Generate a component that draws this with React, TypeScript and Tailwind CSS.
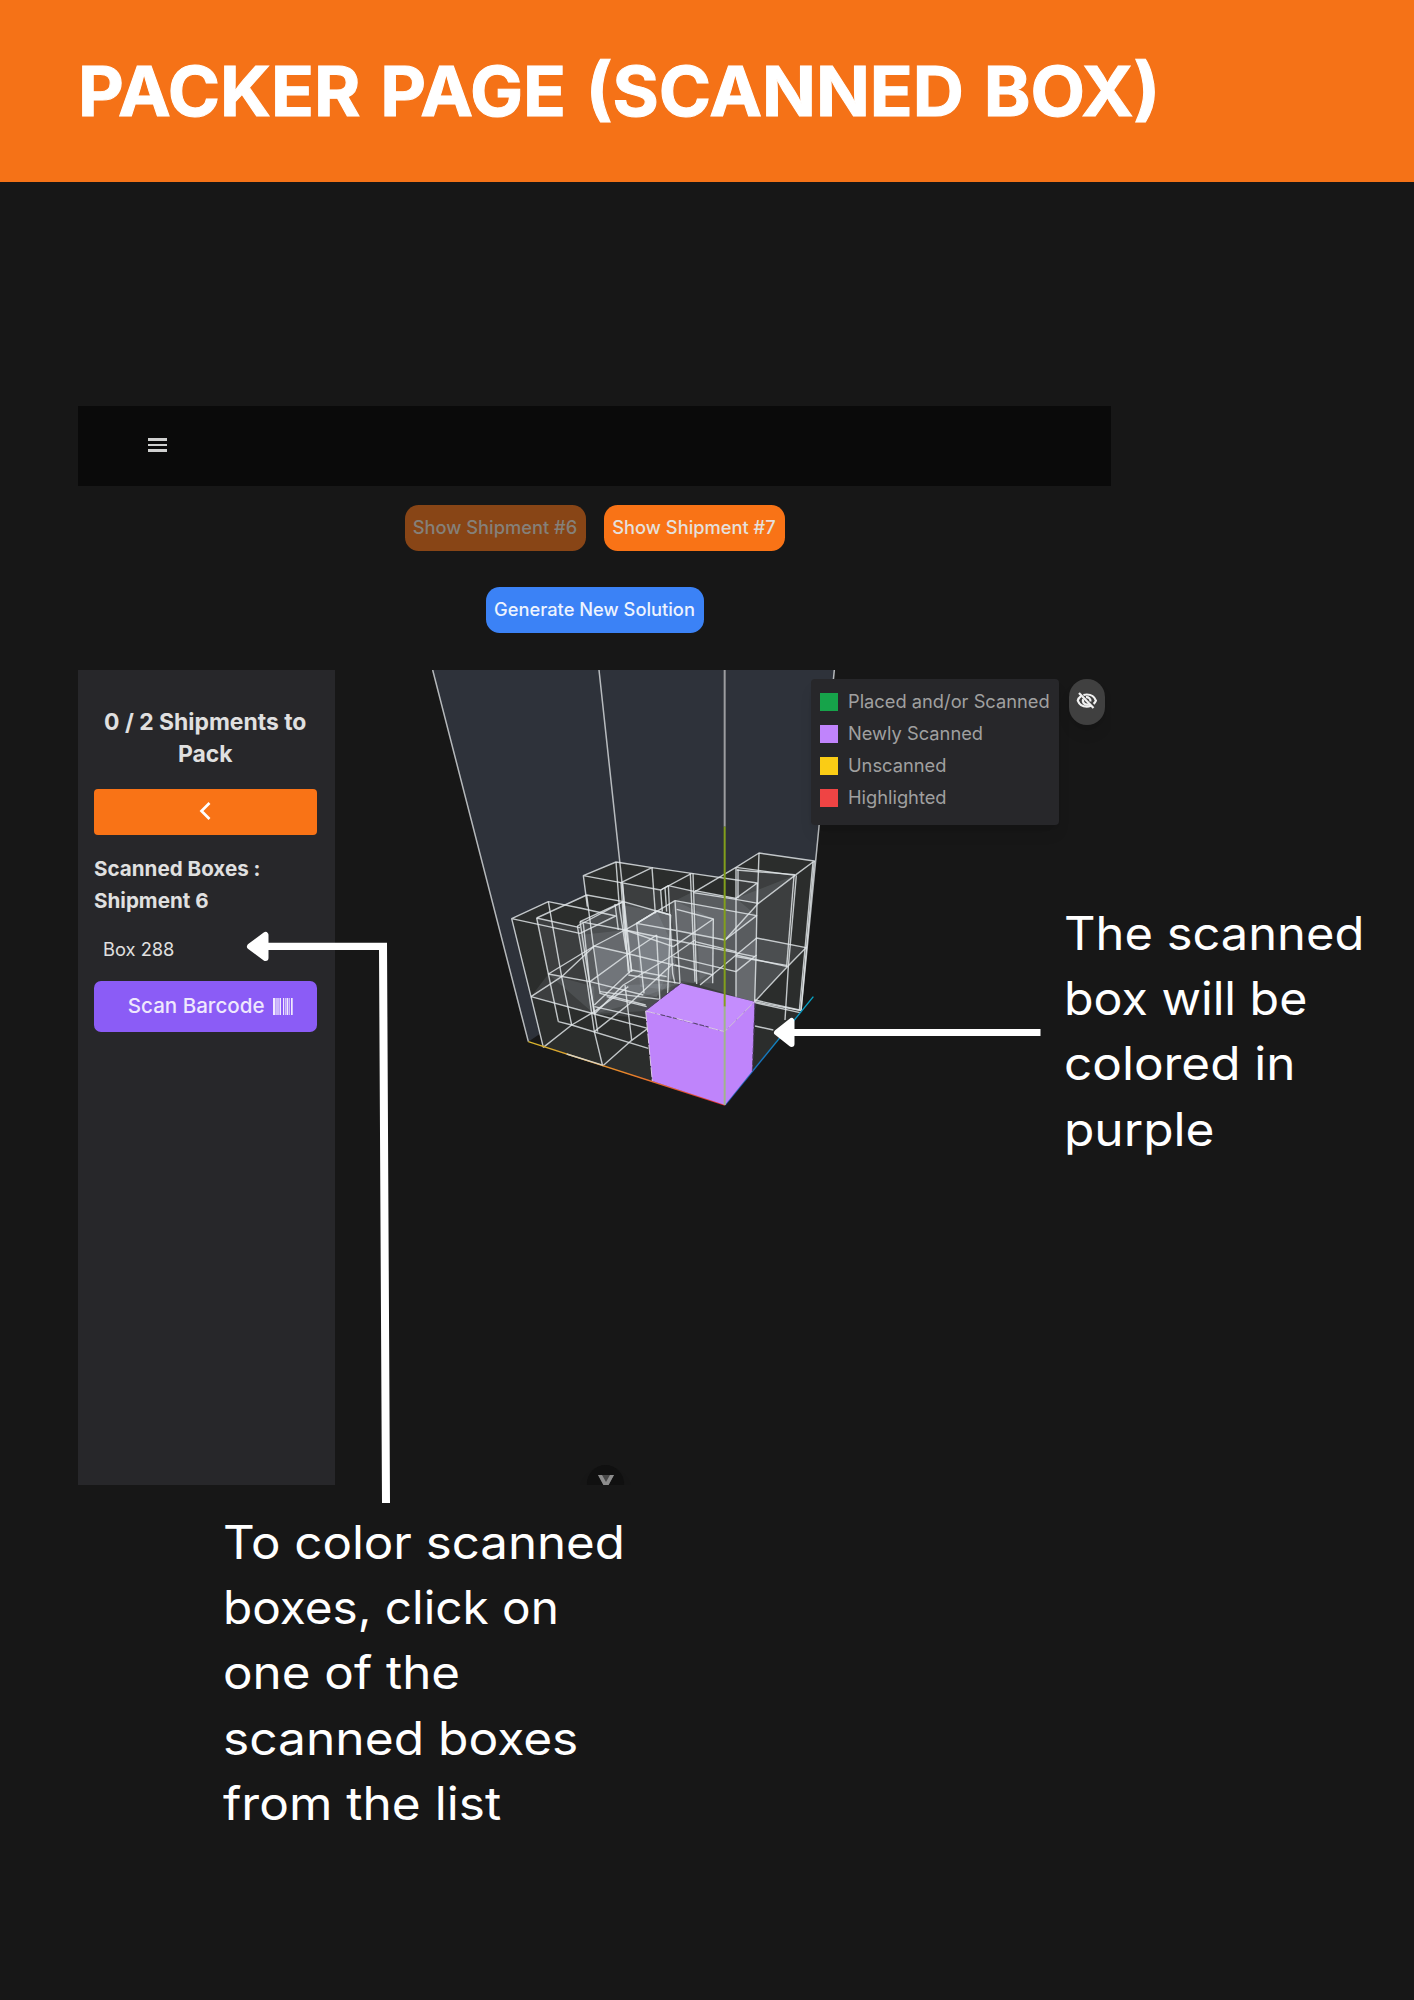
type Line = { text: string; stretch: string };

const scannedNote: Line[] = [
  { text: "The scanned", stretch: "scale-x-[1.062]" },
  { text: "box will be", stretch: "scale-x-[1.050]" },
  { text: "colored in", stretch: "scale-x-[1.075]" },
  { text: "purple", stretch: "scale-x-[1.078]" },
];

const listNote: Line[] = [
  { text: "To color scanned", stretch: "scale-x-[1.070]" },
  { text: "boxes, click on", stretch: "scale-x-[1.037]" },
  { text: "one of the", stretch: "scale-x-[1.072]" },
  { text: "scanned boxes", stretch: "scale-x-[1.080]" },
  { text: "from the list", stretch: "scale-x-[1.078]" },
];

const legend = [
  { label: "Placed and/or Scanned", color: "bg-[#16a34a]" },
  { label: "Newly Scanned", color: "bg-[#c084fc]" },
  { label: "Unscanned", color: "bg-[#facc15]" },
  { label: "Highlighted", color: "bg-[#ef4444]" },
];

// Translucent faces of the stacked boxes.
const faces = [
  "363,128 482,150 487,215 512,225 525,182 585,152 708,175 708,345 585,430 385,395",
  "110,234 240,263 283,522 145,402",
  "93,470 145,402 283,440 283,522",
  "505,137 585,152 708,175 770,227 675,300 520,270",
  "232,258 370,185 512,225 520,360 470,470 283,522",
  "240,245 345,192 470,213 520,320 540,430 437,513 283,522",
  "283,318 410,250 525,182 640,237 640,430 543,430 400,480 300,460",
  "378,270 525,300 525,410 470,470 385,450",
  "283,318 380,345 395,395 300,460",
  "410,250 470,213 512,225 520,320 510,450 420,440",
  "240,285 378,270 385,440 283,522",
  "585,155 708,175 708,470 600,435",
  "708,175 885,106 862,380 764,485 708,470",
  "714,90 885,106 775,190 708,175",
  "525,182 770,227 765,345 764,485 540,430",
  "708,345 770,350 764,485 708,470",
  "708,175 772,129 770,350 708,345",
  "770,294 918,323 862,380 708,345",
  "283,522 375,435 540,430 437,513 440,535",
  "862,380 764,485 708,470 708,345",
];

const edges = [
  "250,107 348,66 456,83 363,128 250,107 262,200",
  "348,66 358,200 378,330",
  "456,83 575,100 482,150 363,128 372,260 388,400",
  "368,130 378,265 395,395",
  "456,83 466,220",
  "482,150 487,215",
  "495,143 500,215",
  "575,100 772,129 708,175 585,152",
  "482,150 505,137 585,155",
  "571,100 585,425",
  "579,100 590,432",
  "505,137 518,400 525,430",
  "585,155 708,82 777,39 943,63 885,106 708,82",
  "580,158 708,178 775,190",
  "708,82 708,470",
  "714,88 714,175",
  "710,90 885,104",
  "777,39 772,190",
  "943,63 903,512",
  "939,65 898,512",
  "889,106 865,380 855,540",
  "882,108 860,380",
  "885,106 775,190 675,300",
  "772,129 768,350 764,485",
  "525,182 770,227 675,300 520,270 410,250 525,182 540,430",
  "530,208 640,237 520,320",
  "640,237 638,430",
  "35,236 145,185 240,204 347,228 240,280 35,236 93,470 130,622",
  "145,185 185,410 215,555",
  "110,234 260,165 370,185 240,245",
  "110,234 240,263",
  "110,234 175,545",
  "260,165 280,318 300,460 437,495",
  "232,258 370,185 512,225",
  "240,245 375,270 520,320",
  "232,258 262,430 283,575 308,678",
  "240,245 283,522",
  "250,250 268,420 293,575",
  "345,192 355,270",
  "370,185 385,395",
  "283,318 375,270 410,250 470,213 512,225",
  "470,213 410,250 432,460",
  "512,225 503,460",
  "470,285 480,490",
  "93,470 185,410 283,318",
  "145,402 283,318 400,345 540,380",
  "93,470 283,522 480,575",
  "145,402 270,425 430,465",
  "130,622 215,555 283,515 385,440",
  "308,678 390,605 505,520",
  "175,545 215,555 445,625",
  "283,522 370,435 520,345 585,300",
  "283,575 390,490 520,370",
  "270,425 380,345 470,285",
  "283,495 395,390 500,410",
  "300,455 480,478",
  "283,500 440,535",
  "320,470 440,500",
  "385,405 540,430",
  "375,435 395,600",
  "375,270 520,300 765,350",
  "520,350 708,395 770,345",
  "525,375 640,405",
  "600,435 770,294 918,323 862,380 708,345",
  "708,350 860,376",
  "862,380 764,485 903,512",
  "764,480 898,510",
  "764,488 900,518",
  "765,558 820,570",
  "585,305 708,335",
];

function PackingScene() {
  return (
    <svg className="block h-[815px] w-[776px]" viewBox="-495 -510 2328 2445" fill="none">
      <defs>
        <linearGradient id="widthAxis" x1="675" y1="795" x2="85" y2="605" gradientUnits="userSpaceOnUse">
          <stop stopColor="#e02f34" />
          <stop offset="0.5" stopColor="#e8842a" />
          <stop offset="1" stopColor="#d6b52c" />
        </linearGradient>
        <linearGradient id="depthAxis" x1="675" y1="795" x2="940" y2="470" gradientUnits="userSpaceOnUse">
          <stop stopColor="#2452b8" />
          <stop offset="1" stopColor="#06a5c4" />
        </linearGradient>
      </defs>
      <polygon points="-202,-510 1003,-510 903,512 395,395 85,605" fill="#2e323a" />
      <polygon
        points="35,236 145,185 200,196 262,165 250,107 348,66 575,100 660,112 777,39 943,63 903,512 675,795 130,622"
        fill="#2b2d2c"
      />
      {faces.map((points) => (
        <polygon key={points} points={points} fill="#eef4fa" fillOpacity="0.09" />
      ))}
      <path d="M-202-510 85 605M297-510 395 395M1003-510 903 512" stroke="#d9dde0" strokeWidth="4.500" strokeOpacity="0.8" />
      <g stroke="#e3e8ea" strokeWidth="4.200" strokeOpacity="0.82" strokeLinejoin="round">
        {edges.map((points) => (
          <polyline key={points} points={points} />
        ))}
      </g>
      <path d="M675 795 85 605" stroke="url(#widthAxis)" strokeWidth="4" />
      <path d="M200 642 310 676" stroke="#d8d2c2" strokeWidth="4" />
      <path d="M675 795 940 470" stroke="url(#depthAxis)" strokeWidth="4" />
      <polygon points="437,513 674,575 675,795 457,723" fill="#bf84fb" />
      <polygon points="437,513 543,430 764,485 674,575" fill="#c48dfd" />
      <polygon points="674,575 764,485 757,693 675,795" fill="#bf84fb" />
      <path d="M437 513 480 524M520 533 575 547M625 562 674 575 764 485M437 513 457 723" stroke="#dcc9e8" strokeWidth="3" strokeDasharray="30 4" />
      <path d="M482 524 530 536M580 549 626 561M437 510 543 430M765 490 757 693" stroke="#53406b" strokeWidth="3" strokeDasharray="14 5" />
      <path d="M674-510V-40" stroke="#9c9da0" strokeWidth="6" />
      <path d="M674-40V500" stroke="#829f1c" strokeWidth="6" />
      <path d="M674 500V795" stroke="#a0b58b" strokeWidth="6" />
    </svg>
  );
}

function EyeOff() {
  return (
    <svg className="h-[18px] w-[22px]" viewBox="0 0 22 18" fill="none" stroke="#f1f1f1" strokeWidth="2.200">
      <path d="M5 4.2C3.3 5.4 2.2 7 1.8 8.6c1.3 3.4 4.8 6 9 6 1.4 0 2.8-.3 4-.8M7.4 3c1.100-.3 2.200-.5 3.400-.5 4.300 0 7.800 2.500 9.100 6.100-.5 1.300-1.300 2.400-2.300 3.300" />
      <path d="M7.200 7.200a4 4 0 0 0 5.600 5M10 5.200a4 4 0 0 1 4.500 4.300" />
      <path d="m3 1 14.500 15" />
    </svg>
  );
}

function Barcode() {
  return (
    <svg className="h-[17px] w-[20px]" viewBox="0 0 20 17" fill="#f1eafe">
      <path d="M0 0h2.500v17H0zM6.500 0H8v17H6.500zM10 0h1.200v17H10zM13.500 0H15v17h-1.500zM18 0h1.700v17H18z" />
      <path d="M3 0h3v17H3zM12 0h1v17h-1zM15.500 0H17v17h-1.500z" fillOpacity="0.65" />
    </svg>
  );
}

function Note({ lines }: { lines: Line[] }) {
  return (
    <p className="text-[46px] leading-[65.2px] text-white">
      {lines.map((line) => (
        <span key={line.text} className={`block w-max origin-left whitespace-nowrap ${line.stretch}`}>
          {line.text}
        </span>
      ))}
    </p>
  );
}

function Sidebar() {
  return (
    <aside className="flex h-[815px] w-[257px] flex-col bg-[#27272a] pt-[36px] pr-[18.5px] pl-4 text-[#e0e0e0]">
      <h2 className="text-center text-[22.9px] leading-8 font-bold">0 / 2 Shipments to Pack</h2>
      <button className="mt-[19px] flex h-[46px] items-center justify-center rounded bg-[#f97316] pb-[2px]">
        <svg className="h-[20px] w-[12px]" viewBox="0 0 12 20" fill="none" stroke="#fff" strokeWidth="2.700">
          <path d="M10.500 2 2.500 10l8 8" />
        </svg>
      </button>
      <h3 className="mt-[18px] text-[20.600px] leading-8 font-bold">
        Scanned Boxes :<br />
        Shipment 6
      </h3>
      <p className="mt-[16px] pl-[9px] text-[18.300px] leading-8">Box 288</p>
      <button className="mt-[16px] flex h-[51px] items-center justify-end gap-[8px] rounded-[7px] bg-[#8b5cf6] pr-[24px] text-[20.570px] font-medium text-[#efe8fd]">
        Scan Barcode
        <Barcode />
      </button>
    </aside>
  );
}

export default function App() {
  return (
    <div className="relative h-[2000px] w-[1414px] overflow-hidden bg-[#171717] font-['Inter',sans-serif]">
      <header className="flex h-[182px] items-center bg-[#f57217] pl-[78px]">
        <h1 className="origin-left scale-x-[1.025] text-[69px] leading-none font-bold whitespace-nowrap text-white [-webkit-text-stroke:1px_white] [word-spacing:3px]">
          PACKER PAGE (SCANNED BOX)
        </h1>
      </header>

      <div className="flex pt-[224px] pl-[78px]">
        <main className="h-[1079px] w-[1033px] shrink-0">
          <nav className="flex h-[80px] items-center bg-[#0a0a0a] pl-[70px]">
            <div className="mt-[-2px] flex w-[19px] flex-col gap-[3px]">
              <span className="h-[2.400px] bg-[#cfd0cf]" />
              <span className="h-[2.400px] bg-[#cfd0cf]" />
              <span className="h-[2.400px] bg-[#cfd0cf]" />
            </div>
          </nav>
          <div className="mt-[18.500px] flex justify-center gap-[18px] text-[18.300px] font-medium">
            <button className="h-[46px] w-[181px] rounded-[13.700px] bg-[#884516] text-[#858079]">Show Shipment #6</button>
            <button className="h-[46px] w-[181px] rounded-[13.700px] bg-[#f97316] text-[#e5e0dc]">Show Shipment #7</button>
          </div>
          <div className="mt-[36.500px] flex justify-center text-[18.300px] font-medium">
            <button className="h-[46px] w-[218px] rounded-[13.700px] bg-[#3b82f6] text-[#edf3fe]">Generate New Solution</button>
          </div>
          <div className="mt-[37px] flex">
            <Sidebar />
            <section className="relative h-[815px] w-[776px] overflow-hidden">
              <PackingScene />
              <div className="absolute top-[9px] right-[6px] flex items-start gap-[10px]">
                <ul className="h-[146px] w-[248px] rounded bg-[#27272a] pt-[7px] pl-[9px] text-[18.300px] text-[#a0a0a0] shadow-lg">
                  {legend.map((item) => (
                    <li key={item.label} className="flex h-8 items-center gap-[10px]">
                      <span className={`size-[18px] ${item.color}`} />
                      <span className="whitespace-nowrap">{item.label}</span>
                    </li>
                  ))}
                </ul>
                <button className="flex h-[46px] w-[36px] items-center justify-center rounded-full bg-[#404040] pb-[3px] shadow-lg">
                  <EyeOff />
                </button>
              </div>
              <div className="absolute top-[795px] left-[252px] flex size-[37px] justify-center rounded-full bg-[#101010] pt-[10px] shadow-lg">
                <svg className="h-[14px] w-[16px]" viewBox="0 0 16 14" fill="#484848">
                  <path d="M0 0h16L9.500 12h-3z" />
                  <path d="M0 0h4l4 7 4-7h4L9.500 12h-3z" fill="#8c8c8c" />
                </svg>
              </div>
            </section>
          </div>
        </main>
        <aside className="mt-[495px] ml-[-47px] shrink-0">
          <Note lines={scannedNote} />
        </aside>
      </div>

      <section className="mt-[25px] pl-[223px]">
        <Note lines={listNote} />
      </section>

      <svg className="absolute top-[925px] left-[240px] h-[585px] w-[810px]" viewBox="240 925 810 585" fill="#fff">
        <path d="M268 942.700H387L390 1503H382L379 950H268Z" />
        <path d="M250 946.500 265.500 935v23Z" stroke="#fff" strokeWidth="6" strokeLinejoin="round" />
        <path d="M794 1029H1040.500V1036H794Z" />
        <path d="M777 1032.500 791.500 1021v23Z" stroke="#fff" strokeWidth="6" strokeLinejoin="round" />
      </svg>
    </div>
  );
}
